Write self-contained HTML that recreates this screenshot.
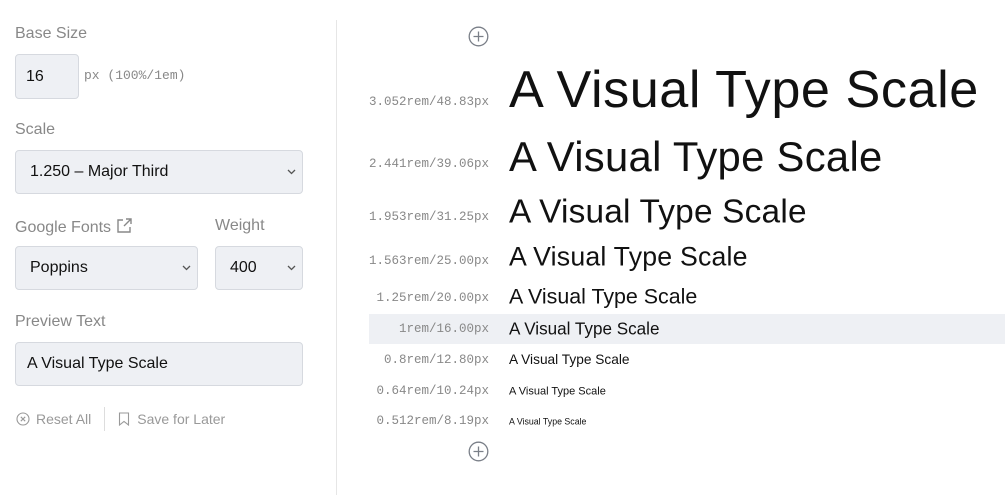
<!DOCTYPE html>
<html><head><meta charset="utf-8"><style>
*{box-sizing:border-box;margin:0;padding:0}
body{width:1005px;height:495px;background:#fff;position:relative;overflow:hidden;font-family:"Liberation Sans",sans-serif;color:#111}
.a{position:absolute}
.lbl{font-size:16px;color:#888;}
.box{position:absolute;background:#eef0f4;border:1px solid #d6d9df;border-radius:4px;font-size:16px;color:#111;display:flex;align-items:center;padding-left:11px}
.chev{position:absolute;right:6px;top:50%;margin-top:-3px}
.mono{font-family:"Liberation Mono",monospace;font-size:12.5px;color:#888;position:absolute;right:516px;white-space:nowrap;transform:translateY(-50%)}
.pv{position:absolute;left:509px;white-space:nowrap;transform:translateY(-50%);color:#111;line-height:1}
</style></head><body>
<div class="a lbl" style="left:15px;top:25px">Base Size</div>
<div class="box" style="left:15px;top:54px;width:64px;height:45px;padding-left:10px">16</div>
<div class="a" style="left:84px;top:68px;font-family:'Liberation Mono',monospace;font-size:13px;color:#888">px (100%/1em)</div>

<div class="a lbl" style="left:15px;top:121px">Scale</div>
<div class="box" style="left:15px;top:150px;width:288px;height:44px;padding-left:14px">1.250 – Major Third<svg class="chev" width="9" height="6" viewBox="0 0 9 6"><path d="M1 1l3.5 3.5L8 1" stroke="#555" fill="none" stroke-width="1.3"/></svg></div>

<div class="a lbl" style="left:15px;top:217px">Google Fonts <svg width="17" height="17" viewBox="0 0 17 17" style="vertical-align:-2px"><path d="M7 3H2v12h12V10M10 2h5v5M15 2L8 9" stroke="#888" fill="none" stroke-width="1.4"/></svg></div>
<div class="a lbl" style="left:215px;top:217px">Weight</div>
<div class="box" style="left:15px;top:246px;width:183px;height:44px;padding-left:14px">Poppins<svg class="chev" width="9" height="6" viewBox="0 0 9 6"><path d="M1 1l3.5 3.5L8 1" stroke="#555" fill="none" stroke-width="1.3"/></svg></div>
<div class="box" style="left:215px;top:246px;width:88px;height:44px;padding-left:14px">400<svg class="chev" width="9" height="6" viewBox="0 0 9 6"><path d="M1 1l3.5 3.5L8 1" stroke="#555" fill="none" stroke-width="1.3"/></svg></div>

<div class="a lbl" style="left:15px;top:313px">Preview Text</div>
<div class="box" style="left:15px;top:342px;width:288px;height:44px;padding-left:11px">A Visual Type Scale</div>

<div class="a" style="left:16px;top:407px;font-size:14px;color:#999;display:flex;align-items:center">
<svg width="14" height="14" viewBox="0 0 14 14"><circle cx="7" cy="7" r="6" stroke="#999" fill="none" stroke-width="1.1"/><path d="M4.8 4.8l4.4 4.4M9.2 4.8l-4.4 4.4" stroke="#999" stroke-width="1.1"/></svg>
<span style="margin-left:6px">Reset All</span>
<span style="display:inline-block;width:1px;height:24px;background:#ddd;margin:0 13px"></span>
<svg width="12" height="14" viewBox="0 0 12 14"><path d="M1.5 1h9v12L6 9.5 1.5 13z" stroke="#999" fill="none" stroke-width="1.1"/></svg>
<span style="margin-left:7px">Save for Later</span></div>

<div class="a" style="left:336px;top:20px;width:1px;height:475px;background:#e6e6e6"></div>

<svg class="a" style="left:468px;top:26px" width="21" height="21" viewBox="0 0 21 21"><circle cx="10.5" cy="10.5" r="9.3" stroke="#7a7f88" fill="none" stroke-width="1.3"/><path d="M10.5 5.5v10M5.5 10.5h10" stroke="#7a7f88" stroke-width="1.3"/></svg>
<svg class="a" style="left:468px;top:441px" width="21" height="21" viewBox="0 0 21 21"><circle cx="10.5" cy="10.5" r="9.3" stroke="#7a7f88" fill="none" stroke-width="1.3"/><path d="M10.5 5.5v10M5.5 10.5h10" stroke="#7a7f88" stroke-width="1.3"/></svg>

<div class="a" style="left:369px;top:314px;width:636px;height:30px;background:#eef0f4"></div>

<div class="mono" style="top:102px">3.052rem/48.83px</div><div class="pv" style="top:90px;font-size:52.2px;letter-spacing:0.55px">A Visual Type Scale</div>
<div class="mono" style="top:164px">2.441rem/39.06px</div><div class="pv" style="top:157px;font-size:41.8px;letter-spacing:0.3px">A Visual Type Scale</div>
<div class="mono" style="top:217px">1.953rem/31.25px</div><div class="pv" style="top:212px;font-size:33.4px;letter-spacing:0.2px">A Visual Type Scale</div>
<div class="mono" style="top:261px">1.563rem/25.00px</div><div class="pv" style="top:257px;font-size:26.7px;letter-spacing:0.2px">A Visual Type Scale</div>
<div class="mono" style="top:298px">1.25rem/20.00px</div><div class="pv" style="top:297px;font-size:21.4px">A Visual Type Scale</div>
<div class="mono" style="top:329px">1rem/16.00px</div><div class="pv" style="top:329px;font-size:17.1px">A Visual Type Scale</div>
<div class="mono" style="top:360px">0.8rem/12.80px</div><div class="pv" style="top:360px;font-size:13.7px">A Visual Type Scale</div>
<div class="mono" style="top:391px">0.64rem/10.24px</div><div class="pv" style="top:392px;font-size:11px">A Visual Type Scale</div>
<div class="mono" style="top:421px">0.512rem/8.19px</div><div class="pv" style="top:422px;font-size:8.8px">A Visual Type Scale</div>
</body></html>
